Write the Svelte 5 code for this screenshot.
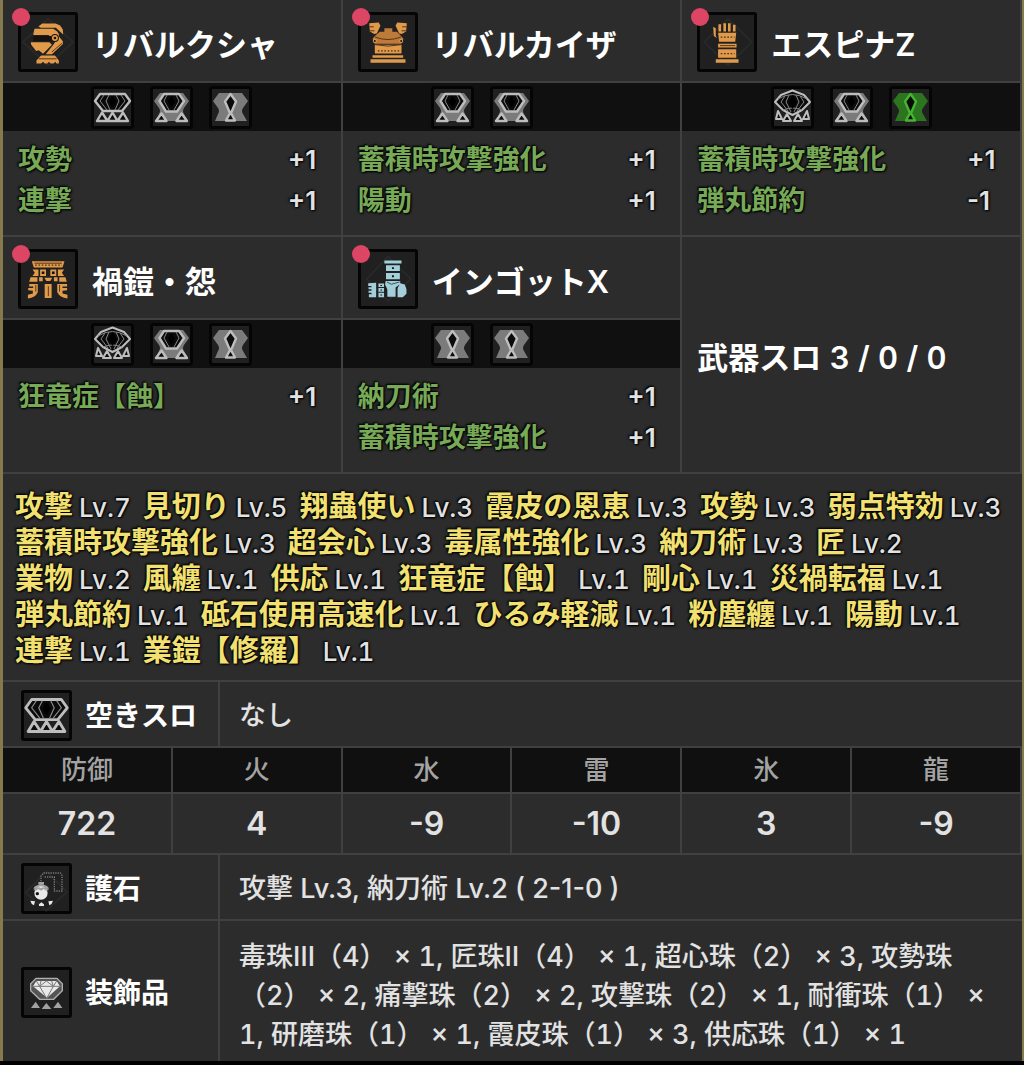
<script>
  const armour = [
    { part: 'head', name: 'リバルクシャ', slots: [3, 2, 1], skills: [['攻勢', '+1'], ['連撃', '+1']] },
    { part: 'chest', name: 'リバルカイザ', slots: [2, 2], skills: [['蓄積時攻撃強化', '+1'], ['陽動', '+1']] },
    { part: 'arm', name: 'エスピナZ', slots: [4, 2, 1], boosted: 2, skills: [['蓄積時攻撃強化', '+1'], ['弾丸節約', '-1']] },
    { part: 'waist', name: '禍鎧・怨', slots: [4, 2, 1], skills: [['狂竜症【蝕】', '+1']] },
    { part: 'leg', name: 'インゴットX', slots: [1, 1], skills: [['納刀術', '+1'], ['蓄積時攻撃強化', '+1']] },
  ];

  const summary = [
    ['攻撃', 7], ['見切り', 5], ['翔蟲使い', 3], ['霞皮の恩恵', 3], ['攻勢', 3], ['弱点特効', 3],
    ['蓄積時攻撃強化', 3], ['超会心', 3], ['毒属性強化', 3], ['納刀術', 3], ['匠', 2],
    ['業物', 2], ['風纏', 1], ['供応', 1], ['狂竜症【蝕】', 1], ['剛心', 1], ['災禍転福', 1],
    ['弾丸節約', 1], ['砥石使用高速化', 1], ['ひるみ軽減', 1], ['粉塵纏', 1], ['陽動', 1],
    ['連撃', 1], ['業鎧【修羅】', 1],
  ];

  const stats = [['防御', '722'], ['火', '4'], ['水', '-9'], ['雷', '-10'], ['氷', '3'], ['龍', '-9']];

  const decorations =
    '毒珠Ⅲ（4） × 1, 匠珠Ⅱ（4） × 1, 超心珠（2） × 3, 攻勢珠（2） × 2, 痛撃珠（2） × 2, 攻撃珠（2） × 1, 耐衝珠（1） × 1, 研磨珠（1） × 1, 霞皮珠（1） × 3, 供応珠（1） × 1';
</script>

{#snippet slot(level, boosted)}
  <svg class="slot" class:boosted viewBox="0 0 43 43" aria-hidden="true">
    {#if level < 3}
      <path class="back" d="M10 7H33L39 15L34 22Q32 25 34 28L38 35H6L9 28Q11 25 9 22L4 15Z" />
    {/if}
    {#if level === 1}
      <path class="gem" d="M21.5 8L27 15.500L22.500 26H20.500L16 15.500Z" />
      <path class="gem" d="M20.500 28H22.500L26 34.500H17Z" />
    {:else if level === 2}
      <path class="gem" d="M14 8H29L34 15L27 25.500H16L9.500 15Z" />
      <path class="facet" d="M17 9L14 15L19 24M26 9L29 15L24 24" />
      <path class="core" d="M21.500 10L25 15.500L21.500 22L18 15.500Z" />
      <path class="gem" d="M11.500 27.500L16.500 35H6ZM31.500 27.500L37 35H26.500Z" />
    {:else if level === 3}
      <path class="gem" d="M9 8H34L39 15L31 25H12L4 15Z" />
      <path class="facet" d="M13 9L9 15L16 24M30 9L34 15L27 24M18 9L15 15L19 24M25 9L28 15L24 24" />
      <path class="core" d="M21.500 10L25 15.500L21.500 22L18 15.500Z" />
      <path class="gem" d="M11 26.500L16.500 35H6ZM21.500 26.500L26.500 35H16.500ZM32 26.500L37 35H26.500Z" />
    {:else}
      <path class="gem thin" d="M7 25L11 33H5ZM36 25L38 33H32ZM16 28L20 35H12ZM27 28L31 35H23Z" />
      <path class="gem thin" d="M21.500 4.500L33 9L39 16L31 24L21.500 29L12 24L4 16L10 9Z" />
      <path class="facet" d="M7 13Q21 4 36 13M14 10L10 16L17 25M29 10L33 16L26 25M18 9L15 16L20 26M25 9L28 16L23 26M12 24Q21.500 20 31 24" />
      <path class="core" d="M21.500 9L25.500 16L21.500 23L17.500 16Z" />
    {/if}
  </svg>
{/snippet}

{#snippet piece(part)}
  {#if part === 'head'}
    <svg class="orange" viewBox="57 31 182 182" aria-hidden="true">
      <path class="ghost" d="M148 52L224 122L148 192L72 122Z" />
      <path d="M119 74L131 66H171L185 72L193 84L194 99L184 90L172 79H126Z" />
      <path d="M107 82H164L176 90L181 98V112H160L150 101H103Z" />
      <path class="dark" d="M103 104H158V120H103Z" />
      <path d="M96 123H152L160 130L133 158L120 147L112 149L97 130Z" />
      <path d="M180 104L193 120V128L160 159H141L166 128Z" />
      <circle class="dark" cx="169" cy="110" r="12" />
      <circle cx="169" cy="110" r="9" /><circle class="dark" cx="169" cy="110" r="4" />
      <path class="cut" d="M190 126L160 152" />
      <path d="M127 163H169L181 178V187H174L170 182L165 187H156L151 182L146 187H138L133 182L127 187H113V178Z" />
      <path class="cut" d="M120 173H174" />
    </svg>
  {:else if part === 'chest'}
    <svg class="orange" viewBox="54 31 182 182" aria-hidden="true">
      <path d="M88 65L117 63L122 73L111 96L103 98L90 90Z" />
      <path d="M202 65L173 63L168 73L179 96L187 98L200 90Z" />
      <path class="dim" d="M134 80H158V91H172L184 103L192 112L185 127H105L98 112L106 103L120 91H134Z" />
      <path class="cut" d="M106 107Q145 122 184 107M88 76H102M202 76H188M90 88H104M200 88H186" />
      <path d="M105 130H186V157H105Z" />
      <path class="cut" d="M105 130Q145 139 186 130" />
      <circle cx="105" cy="119" r="6" /><circle cx="185" cy="119" r="6" />
      <circle class="dark" cx="105" cy="119" r="3" /><circle class="dark" cx="185" cy="119" r="3" />
      <path class="dots" d="M114 149H180" />
      <path d="M98 162H191V170H98ZM92 174H198V185H92Z" />
    </svg>
  {:else if part === 'arm'}
    <svg class="orange" viewBox="54 31 182 182" aria-hidden="true">
      <path class="ghost" d="M148 52L220 122L148 192L76 122Z" />
      <path d="M119 68H127V90H119ZM134 65H142V90H134ZM148 65H156V90H148ZM163 70H171V90H163ZM103 76L111 80V103L114 110L105 104Z" />
      <path d="M118 94H173L170 121H121ZM118 127H174V139H118ZM118 144H173V170H118ZM111 174H180V185H111Z" />
      <path class="dots" d="M126 107H168M126 157H168" />
      <path class="cut" d="M124 133H170" />
    </svg>
  {:else if part === 'waist'}
    <svg class="orange" viewBox="57 41 182 182" aria-hidden="true">
      <path d="M99 78H198L192 97H105Z" />
      <path class="cut" d="M107 84H190" />
      <path class="dots" d="M109 90H190" />
      <path d="M101 103H119V123H101L108 113ZM124 103H142V123H124ZM155 103H173V123H155ZM178 103H197L190 113L197 123H178Z" />
      <path class="dark" d="M129 109H137V117H129ZM160 109H168V117H160Z" />
      <path d="M95 127H116V140H91ZM121 127H132V139H121ZM166 127H177V139H166ZM182 127H201L205 140H182ZM137 128H161L155 138H143Z" />
      <path d="M91 147H117V172Q110 188 87 191V180L102 176V168L88 166V159H103V155H91ZM206 147H176V172Q184 188 207 191V180L192 176V168L206 166V159H192V155H206ZM138 147H159V190H138Z" />
      <path class="cut" d="M149 154V184M111 150V170M183 150V170" />
    </svg>
  {:else}
    <svg class="ice" viewBox="54 41 182 182" aria-hidden="true">
      <path class="ghost" d="M80 132L145 64L214 132L145 198Z" />
      <path d="M134 76H186V85H134ZM139 90H181V108H139ZM139 114H181V133H139ZM138 138H182V147L168 158V186H143V163L136 149ZM174 160L182 145L196 149L201 163V177L190 187H174Z" />
      <path d="M85 145L109 143V187H87V178H95V174H86V168H95V163H86V157H95V153H85ZM116 146H133V156H116ZM116 159H133V171H116ZM116 174H133V187H116Z" />
      <path class="dark" d="M157 96H163V102H157ZM157 121H163V127H157ZM122 150H127V153H122ZM122 164H127V167H122ZM122 179H127V182H122Z" />
      <path class="cut" d="M142 141L155 148L180 141" />
    </svg>
  {/if}
{/snippet}

<main>
  <section class="armour">
    {#each armour as item}
      <article>
        <header>
          <span class="frame">{@render piece(item.part)}<i class="badge"></i></span>
          <h2>{item.name}</h2>
        </header>
        <div class="slots">
          {#each [0, 1, 2] as n}
            {#if item.slots[n]}
              {@render slot(item.slots[n], item.boosted === n)}
            {:else}
              <span></span>
            {/if}
          {/each}
        </div>
        <ul>
          {#each item.skills as [name, value]}
            <li><span>{name}</span><b>{value}</b></li>
          {/each}
        </ul>
      </article>
    {/each}
    <article class="weapon"><h2>武器スロ 3 / 0 / 0</h2></article>
  </section>

  <section class="summary">
    {#each summary as [name, level]}
      <span class="skill"><b>{name}</b><span>Lv.{level}</span></span>
    {/each}
  </section>

  <section class="info">
    <h3><span class="plain">{@render slot(3, false)}</span>空きスロ</h3>
    <p>なし</p>
  </section>

  <table>
    <thead>
      <tr>{#each stats as [label]}<th scope="col">{label}</th>{/each}</tr>
    </thead>
    <tbody>
      <tr>{#each stats as [, value]}<td>{value}</td>{/each}</tr>
    </tbody>
  </table>

  <section class="info">
    <h3>
      <svg class="tile" viewBox="62 41 153 153" aria-hidden="true">
        <path class="ghost" d="M76 130L138 66L200 128L138 184Z" />
        <path class="chain" d="M122 96V79L130 71H180L185 78V125H162V83H132" />
        <path class="grey" d="M114 98H131V106H114ZM99 118Q102 106 122 106Q143 106 146 118Z" />
        <circle class="white" cx="122" cy="131" r="20" />
        <path class="grey" d="M99 122Q110 110 122 116Q136 110 146 122L138 124L130 119L122 124L114 119L107 124Z" />
        <circle class="dark" cx="111" cy="133" r="5" />
        <path class="white" d="M90 154L104 156L101 168Q92 164 90 154ZM116 165L123 159L131 165V170H116ZM158 154L144 156L147 168Q156 164 158 154Z" />
      </svg>護石
    </h3>
    <p>攻撃 Lv.3, 納刀術 Lv.2 ( 2-1-0 )</p>
  </section>

  <section class="info last">
    <h3>
      <svg class="tile" viewBox="62 356 153 153" aria-hidden="true">
        <path class="rim" d="M107 390H170L186 406V427L160 453H118L91 427V406Z" />
        <path class="white" d="M108 398H169L179 414L140 448L98 414Z" />
        <path class="line" d="M94 414H184M122 398L118 414L139 450L159 414L154 398M108 398L118 414L138 398L159 414L169 398" />
        <path class="grey" d="M106 460L119 479H92ZM138 464L153 482H124ZM173 460L186 479H159Z" />
      </svg>装飾品
    </h3>
    <p>{decorations}</p>
  </section>
</main>

<style>
  :global(body) {
    margin: 0;
    background: #000;
  }
  main {
    box-sizing: border-box;
    border-left: 3px solid #857a4d;
    border-right: 2px solid #857a4d;
    background: #2c2c2c;
    color: #e2e2e2;
    font-family: Inter, 'Noto Sans CJK JP', sans-serif;
    font-size: 26px;
    font-weight: 500;
  }
  h2, h3, p, ul {
    margin: 0;
    padding: 0;
  }
  .armour {
    display: grid;
    grid-template-columns: repeat(3, 1fr);
  }
  article {
    border-right: 2px solid #404040;
    border-bottom: 2px solid #404040;
  }
  header {
    display: flex;
    align-items: center;
    gap: 14px;
    padding: 12px 15px 9px;
    border-bottom: 2px solid #404040;
  }
  h2 {
    padding-top: 6px;
    color: #fff;
    font-size: 31px;
    font-weight: 600;
    font-variant-numeric: tabular-nums;
    line-height: 40px;
    white-space: nowrap;
  }
  .frame {
    position: relative;
    flex: none;
    height: 60px;
  }
  .frame svg {
    width: 60px;
    height: 60px;
  }
  .frame svg, .tile, .slot {
    display: block;
    box-sizing: border-box;
    background: #202020;
    border-radius: 3px;
    box-shadow: inset 0 0 0 3px #050505;
  }
  .badge {
    position: absolute;
    left: -6px;
    top: -4px;
    width: 18px;
    height: 18px;
    border-radius: 50%;
    background: #dd4564;
  }
  .orange { fill: #e09a4a; }
  .ice { fill: #a3cfdb; }
  .dark { fill: #17120f; }
  .dim { fill: #bd7a38; }
  .cut { fill: none; stroke: #55361c; stroke-width: 3; }
  .ice .cut { stroke: #35535d; }
  .dots { fill: none; stroke: #4d3017; stroke-width: 4; stroke-dasharray: 5 5; }
  .ghost { fill: none; stroke: #2a2a2a; stroke-width: 5; }
  .slots {
    display: flex;
    justify-content: center;
    align-items: center;
    gap: 16px;
    height: 48px;
    background: #101010;
  }
  .slot, .slots span {
    width: 43px;
    height: 43px;
  }
  .back { fill: #7b7b7b; }
  .gem { fill: #0b0b0b; stroke: #bdbdbd; stroke-width: 2.4; stroke-linejoin: round; }
  .thin { stroke-width: 2; }
  .facet { fill: none; stroke: #888; stroke-width: 1; }
  .core { fill: #000; }
  .boosted .back { fill: #2c7420; }
  .boosted .gem { stroke: #45b52f; }
  ul {
    list-style: none;
    padding: 8px 15px 14px;
    text-shadow: 0 0 3px #000, 1px 1px 2px #000, -1px -1px 2px #000;
  }
  li {
    display: flex;
    justify-content: space-between;
    line-height: 41px;
  }
  li span {
    color: #77a957;
    font-size: 27px;
    font-weight: 700;
  }
  li b {
    width: 38px;
    font-weight: 600;
  }
  .weapon {
    display: flex;
    align-items: center;
    padding: 0 15px;
  }
  .summary {
    display: flex;
    flex-wrap: wrap;
    column-gap: 12px;
    padding: 15px 12px 11px;
    border-bottom: 2px solid #404040;
    font-variant-numeric: tabular-nums;
    text-shadow: 0 0 3px #000, 1px 1px 2px #000, -1px -1px 2px #000;
  }
  .skill {
    display: flex;
    align-items: baseline;
    gap: 6px;
    height: 36px;
    line-height: 36px;
    white-space: nowrap;
  }
  .skill b {
    color: #f2e171;
    font-size: 29px;
    font-weight: 700;
  }
  .info {
    display: grid;
    grid-template-columns: 217px 1fr;
    min-height: 64px;
    border-bottom: 2px solid #404040;
  }
  .last {
    border-bottom: 0;
  }
  h3 {
    display: flex;
    align-items: center;
    gap: 13px;
    padding: 3px 0 0 18px;
    border-right: 2px solid #404040;
    color: #fff;
    font-size: 28px;
    font-weight: 600;
    line-height: 40px;
  }
  .tile, .plain :global(svg) {
    width: 51px;
    height: 51px;
    flex: none;
  }
  p {
    align-self: center;
    padding: 3px 28px 0 19px;
    font-size: 27px;
    line-height: 39px;
  }
  .last p {
    padding-top: 16px;
    padding-bottom: 7px;
    font-variant-numeric: tabular-nums;
  }
  .grey { fill: #a2a2a2; }
  .white { fill: #e9e9e9; }
  .rim { fill: #555; stroke: #b0b0b0; stroke-width: 4; }
  .line { fill: none; stroke: #777; stroke-width: 3; }
  .chain { fill: none; stroke: #777; stroke-width: 4; stroke-dasharray: 4 3; }
  table {
    width: 100%;
    table-layout: fixed;
    border-collapse: separate;
    border-spacing: 0;
  }
  th, td {
    padding: 0;
    text-align: center;
    border-right: 2px solid #404040;
    border-bottom: 2px solid #404040;
  }
  th {
    height: 44px;
    background: #101010;
    color: #a3a3a3;
    font-weight: 500;
    line-height: 44px;
  }
  td {
    height: 59px;
    font-size: 32px;
    font-weight: 600;
    line-height: 59px;
  }
</style>
